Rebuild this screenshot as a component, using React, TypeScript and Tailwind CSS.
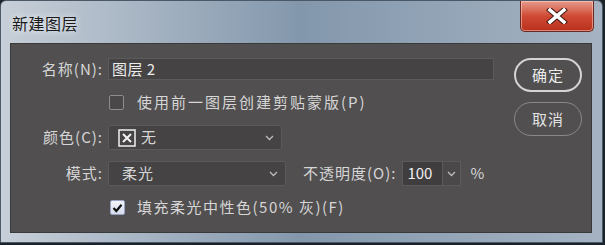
import React from "react";

const font = { fontFamily: '"Noto Sans CJK SC", "Noto Sans", sans-serif' };

const Chevron: React.FC = () => (
  <svg width="9" height="6" viewBox="0 0 9 6" className="shrink-0">
    <polyline points="1,1 4.5,4.5 8,1" fill="none" stroke="#bdbdbd" strokeWidth="1.3" />
  </svg>
);

const App: React.FC = () => {
  return (
    <div
      className="w-[605px] h-[245px] bg-[#1c2229] overflow-hidden"
      style={font}
    >
      <div className="w-[603px] h-[243px] flex flex-col rounded-t-[6px] border border-[#4a5868] bg-gradient-to-r from-[#c7cfd8] via-[#8397ac] to-[#a5b3c2]">
        {/* Title bar */}
        <div className="h-[42px] flex items-start justify-between">
          <div className="pl-[11px] pt-[10px] text-[16px] text-[#1a1a1a] tracking-[0.5px] [text-shadow:0_0_6px_#ffffff]">
            新建图层
          </div>
          <div className="mr-[8px] w-[74px] h-[31px] rounded-b-[5px] border border-t-0 border-[#6b2a22] bg-gradient-to-b from-[#e59a8c] via-[#cf4a34] to-[#b9301c] shadow-[inset_0_0_0_1px_rgba(255,220,210,0.5)] flex items-center justify-center">
            <svg width="22" height="16" viewBox="0 0 22 16">
              <path d="M4 2 L18 14 M18 2 L4 14" stroke="#3a1410" strokeWidth="5.5" strokeLinecap="square" />
              <path d="M4 2 L18 14 M18 2 L4 14" stroke="#ffffff" strokeWidth="3.6" strokeLinecap="square" />
            </svg>
          </div>
        </div>

        {/* Content panel */}
        <div className="ml-[9px] mr-[10px] h-[190px] bg-[#514f50] border border-[#3b3a3b] flex text-[15px] text-[#d6d6d6]">
          {/* Form */}
          <div className="w-[488px] flex flex-col pt-[14px]">
            {/* Name */}
            <div className="flex items-center h-[22px]">
              <div className="w-[97px] text-right pr-[5px] tracking-[1px]">名称(N):</div>
              <div className="w-[386px] h-[22px] bg-[#454344] border border-[#5c5a5b] flex items-center pl-[3px] tracking-[0.5px] text-[#ececec]">
                图层 2
              </div>
            </div>

            {/* Clip checkbox */}
            <div className="flex items-center h-[15px] mt-[15px] pl-[98px]">
              <div className="w-[15px] h-[15px] border border-[#8e8c8d] rounded-[2px] bg-[#4a4849]" />
              <div className="ml-[13px] tracking-[2px]">使用前一图层创建剪贴蒙版(P)</div>
            </div>

            {/* Color */}
            <div className="flex items-center h-[25px] mt-[15px]">
              <div className="w-[97px] text-right pr-[5px] tracking-[1px]">颜色(C):</div>
              <div className="w-[174px] h-[25px] bg-[#454344] border border-[#5c5a5b] rounded-[2px] flex items-center pl-[9px] pr-[7px]">
                <svg width="18" height="18" viewBox="0 0 18 18" className="shrink-0">
                  <rect x="1" y="1" width="16" height="16" fill="none" stroke="#e6e6e6" strokeWidth="1.6" />
                  <path d="M5 5 L13 13 M13 5 L5 13" stroke="#f2f2f2" strokeWidth="2" />
                </svg>
                <span className="ml-[5px] flex-1">无</span>
                <Chevron />
              </div>
            </div>

            {/* Mode + opacity */}
            <div className="flex items-center h-[25px] mt-[11px]">
              <div className="w-[97px] text-right pr-[5px] tracking-[1px]">模式:</div>
              <div className="w-[178px] h-[25px] bg-[#454344] border border-[#5c5a5b] rounded-[2px] flex items-center pl-[13px] pr-[7px]">
                <span className="flex-1 tracking-[1px]">柔光</span>
                <Chevron />
              </div>
              <div className="ml-[17px] tracking-[1px]">不透明度(O):</div>
              <div className="ml-[6px] flex h-[25px] border border-[#5c5a5b]">
                <div className="w-[39px] bg-[#3f3d3e] flex items-center pl-[4px] text-[#f0f0f0]">100</div>
                <div className="w-[18px] bg-[#4a4849] border-l border-[#5c5a5b] flex items-center justify-center">
                  <Chevron />
                </div>
              </div>
              <div className="ml-[9px]">%</div>
            </div>

            {/* Fill checkbox */}
            <div className="flex items-center h-[15px] mt-[14px] pl-[99px]">
              <div className="w-[15px] h-[15px] border border-[#9aa4c4] rounded-[2px] bg-gradient-to-b from-[#f4f5fb] to-[#d7dcec] flex items-center justify-center">
                <svg width="11" height="10" viewBox="0 0 11 10">
                  <path d="M1.5 5 L4.3 8 L9.5 1.8" fill="none" stroke="#111111" strokeWidth="2.2" />
                </svg>
              </div>
              <div className="ml-[12px] tracking-[1.5px]">填充柔光中性色(50% 灰)(F)</div>
            </div>
          </div>

          {/* Buttons */}
          <div className="flex flex-col pt-[14px] pl-[15px] gap-[10px]">
            <div className="w-[68px] h-[34px] rounded-full border-2 border-[#d4d4d4] flex items-center justify-center tracking-[1px] text-[#ececec]">
              确定
            </div>
            <div className="w-[68px] h-[34px] rounded-full border-[1.5px] border-[#8a8889] flex items-center justify-center tracking-[1px] text-[#e2e2e2]">
              取消
            </div>
          </div>
        </div>
      </div>
    </div>
  );
};

export default App;
